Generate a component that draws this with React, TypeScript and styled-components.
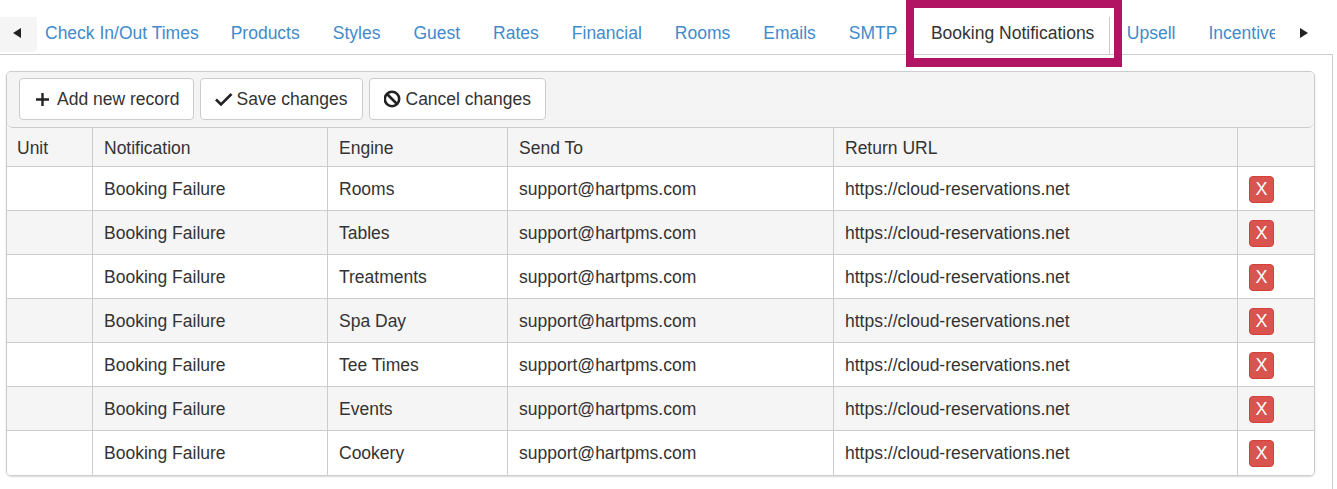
import React from "react";
import styled, { createGlobalStyle } from "styled-components";

const Global = createGlobalStyle`
  html, body { margin: 0; padding: 0; background: #fff; }
  body { font-family: "Liberation Sans", Arial, sans-serif; font-size: 17.5px; color: #333; }
`;

const Page = styled.div`
  position: relative;
  width: 1333px;
  height: 489px;
  box-sizing: border-box;
  overflow: hidden;
`;

const TabStrip = styled.div`
  display: flex;
  align-items: flex-end;
  height: 55px;
  box-sizing: border-box;
  border-bottom: 1px solid #ccc;
`;

const ArrowBox = styled.div<{ $shaded?: boolean }>`
  flex: none;
  width: ${(p) => (p.$shaded ? "37px" : "58px")};
  height: 35px;
  padding: 0 ${(p) => (p.$shaded ? "3px" : "0")} 3px 0;
  box-sizing: border-box;
  display: flex;
  align-items: center;
  justify-content: center;
  background: ${(p) => (p.$shaded ? "#f5f5f5" : "transparent")};
  border-radius: 0 0 4px 0;
  align-self: flex-start;
  margin-top: 17px;
`;

const Arrow = styled.svg`
  width: 8px;
  height: 10px;
  fill: #222;
`;

const TabScroller = styled.div`
  flex: none;
  width: 1238px;
  display: flex;
  overflow: hidden;
  white-space: nowrap;
  padding-left: 8px;
  box-sizing: border-box;
`;

const Tab = styled.div<{ $active?: boolean }>`
  flex: none;
  height: 37px;
  line-height: 32px;
  padding: 0 16.5px;
  box-sizing: border-box;
  color: ${(p) => (p.$active ? "#333" : "#428bca")};
  background: ${(p) => (p.$active ? "#fff" : "transparent")};
  ${(p) => (p.$active ? "border-right: 1px solid #ccc; padding: 0 15px 0 17px;" : "")}
`;

const FirstTab = styled(Tab)`
  padding: 0 15.5px 0 0;
`;

const Highlight = styled.div`
  position: absolute;
  left: 906px;
  top: 0;
  width: 216px;
  height: 67px;
  box-sizing: border-box;
  border: 8px solid #b01463;
  border-bottom-width: 9px;
  pointer-events: none;
`;

const Body = styled.div`
  height: 434px;
  box-sizing: border-box;
  padding: 16px 17px 0 6px;
  border-right: 1px solid #ccc;
`;

const Panel = styled.div`
  width: 1309px;
  height: 405px;
  box-sizing: border-box;
  border: 1px solid #ccc;
  border-radius: 5px;
  box-shadow: 0 1px 2px rgba(0, 0, 0, 0.15);
  overflow: hidden;
`;

const Toolbar = styled.div`
  height: 56px;
  box-sizing: border-box;
  display: flex;
  gap: 6px;
  padding: 6px 12px;
  background: #f4f4f4;
  border-bottom: 1px solid #ccc;
  border-radius: 0 0 5px 5px;
`;

const ToolButton = styled.button`
  height: 42px;
  box-sizing: border-box;
  display: flex;
  align-items: center;
  gap: 4px;
  padding: 0 14px;
  font: inherit;
  color: #333;
  background: #fff;
  border: 1px solid #ccc;
  border-radius: 4px;
`;

const AddButton = styled(ToolButton)`
  padding: 0 13px 0 15px;
`;

const Icon = styled.svg`
  width: 18px;
  height: 18px;
  flex: none;
  fill: none;
  stroke: #222;
`;

const Grid = styled.table`
  width: 1307px;
  table-layout: fixed;
  border-collapse: separate;
  border-spacing: 0;
`;

const HeadCell = styled.th`
  height: 39px;
  padding: 3px 0 0 11px;
  box-sizing: border-box;
  font-weight: 400;
  text-align: left;
  background: #f5f5f5;
  border-left: 1px solid #ccc;
  border-bottom: 1px solid #ccc;
  &:first-child { border-left: 0; padding-left: 10px; }
`;

const Row = styled.tr<{ $alt: boolean }>`
  background: ${(p) => (p.$alt ? "#f5f5f5" : "#fff")};
`;

const Cell = styled.td`
  height: 44px;
  padding: 2px 0 0 11px;
  box-sizing: border-box;
  border-left: 1px solid #ccc;
  border-bottom: 1px solid #ccc;
  &:first-child { border-left: 0; }
  tr:last-child & { border-bottom: 0; padding-top: 1px; }
`;

const DeleteButton = styled.button`
  display: block;
  width: 25px;
  height: 27px;
  padding: 0;
  font: inherit;
  font-size: 18px;
  line-height: 25px;
  color: #fff;
  background: #d9534f;
  border: 1px solid #d43f3a;
  border-radius: 4px;
`;

const tabs = ["Products", "Styles", "Guest", "Rates", "Financial", "Rooms", "Emails", "SMTP"];
const engines = ["Rooms", "Tables", "Treatments", "Spa Day", "Tee Times", "Events", "Cookery"];
const widths = [85, 235, 180, 326, 404, 77];

export default function App() {
  return (
    <Page>
      <Global />
      <TabStrip>
        <ArrowBox $shaded>
          <Arrow viewBox="0 0 8 10"><path d="M8 0v10L0 5z" /></Arrow>
        </ArrowBox>
        <TabScroller>
          <FirstTab>Check In/Out Times</FirstTab>
          {tabs.map((t) => <Tab key={t}>{t}</Tab>)}
          <Tab $active>Booking Notifications</Tab>
          <Tab>Upsell</Tab>
          <Tab>Incentives</Tab>
        </TabScroller>
        <ArrowBox>
          <Arrow viewBox="0 0 8 10"><path d="M0 0v10l8-5z" /></Arrow>
        </ArrowBox>
      </TabStrip>
      <Highlight />
      <Body>
        <Panel>
          <Toolbar>
            <AddButton>
              <Icon viewBox="0 0 18 18" strokeWidth="2.4"><path d="M7.5 3v13M1 9.5h13" /></Icon>
              Add new record
            </AddButton>
            <ToolButton>
              <Icon viewBox="0 0 18 18" strokeWidth="2.6"><path d="M1 9.5l5 5L16.5 4" /></Icon>
              Save changes
            </ToolButton>
            <ToolButton>
              <Icon viewBox="0 0 18 18" strokeWidth="2.6"><circle cx="8" cy="9" r="7.2" /><path d="M3 4l10 10" /></Icon>
              Cancel changes
            </ToolButton>
          </Toolbar>
          <Grid>
            <colgroup>
              {widths.map((w, i) => <col key={i} style={{ width: w }} />)}
            </colgroup>
            <thead>
              <tr>
                <HeadCell>Unit</HeadCell>
                <HeadCell>Notification</HeadCell>
                <HeadCell>Engine</HeadCell>
                <HeadCell>Send To</HeadCell>
                <HeadCell>Return URL</HeadCell>
                <HeadCell />
              </tr>
            </thead>
            <tbody>
              {engines.map((e, i) => (
                <Row key={e} $alt={i % 2 === 1}>
                  <Cell />
                  <Cell>Booking Failure</Cell>
                  <Cell>{e}</Cell>
                  <Cell>support@hartpms.com</Cell>
                  <Cell>https://cloud-reservations.net</Cell>
                  <Cell><DeleteButton>X</DeleteButton></Cell>
                </Row>
              ))}
            </tbody>
          </Grid>
        </Panel>
      </Body>
    </Page>
  );
}
